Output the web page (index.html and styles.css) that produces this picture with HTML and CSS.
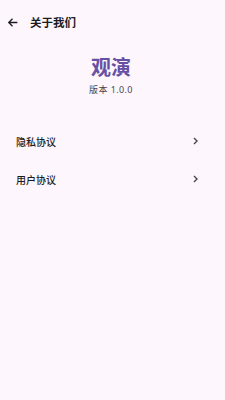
FILE: index.html
```html
<!DOCTYPE html>
<html>
<head>
    <meta charset="UTF-8">
    <title>关于我们</title>
    <link rel="stylesheet" href="styles.css">
</head>
<body>
<div id="wrap">
    <div class="bar">
        <svg class="back" width="13" height="13" viewBox="0 0 24 24"><path d="M21 12H5M12 5l-7 7 7 7" fill="none" stroke="#1d1b20" stroke-width="2.4"/></svg>
        <p class="title">关于我们</p>
    </div>

    <div class="brand">
        <p class="name">观演</p>
        <p class="ver">版本 1.0.0</p>
    </div>

    <ul class="list">
        <li><span>隐私协议</span><svg width="7" height="8" viewBox="0 0 7 8"><path d="M2 1l3 3-3 3" fill="none" stroke="#49454f" stroke-width="1.4"/></svg></li>
        <li><span>用户协议</span><svg width="7" height="8" viewBox="0 0 7 8"><path d="M2 1l3 3-3 3" fill="none" stroke="#49454f" stroke-width="1.4"/></svg></li>
    </ul>
</div>
</body>
</html>
```

FILE: styles.css
```css
body{margin:0;font-family:"Noto Sans","Noto Sans CJK SC",sans-serif;background:#fdf7fd;}
p,ul,li{margin:0;padding:0;list-style:none;}

#wrap{
    width: 225px;
    height: 400px;
    background: #fdf7fd;
}
#wrap .bar{
    display: flex;
    align-items: center;
    height: 44px;
    padding-left: 6px;
}
#wrap .bar .back{
    margin-right: 11px;
}
#wrap .bar .title{
    font-size: 11.5px;
    font-weight: 600;
    color: #1d1b20;
}
#wrap .brand{
    display: flex;
    flex-direction: column;
    align-items: center;
    padding-top: 11px;
    padding-right: 3px;
}
#wrap .brand .name{
    font-size: 20px;
    font-weight: 700;
    color: #6750a4;
    line-height: 26px;
}
#wrap .brand .ver{
    margin-top: 3px;
    font-size: 9px;
    letter-spacing: 0.4px;
    color: #49454f;
    line-height: 12px;
}
#wrap .list{
    margin-top: 26px;
}
#wrap .list li{
    display: flex;
    justify-content: space-between;
    align-items: center;
    height: 38px;
    padding: 0 26px 0 16px;
    font-size: 10px;
    font-weight: 500;
    color: #1d1b20;
}
```
